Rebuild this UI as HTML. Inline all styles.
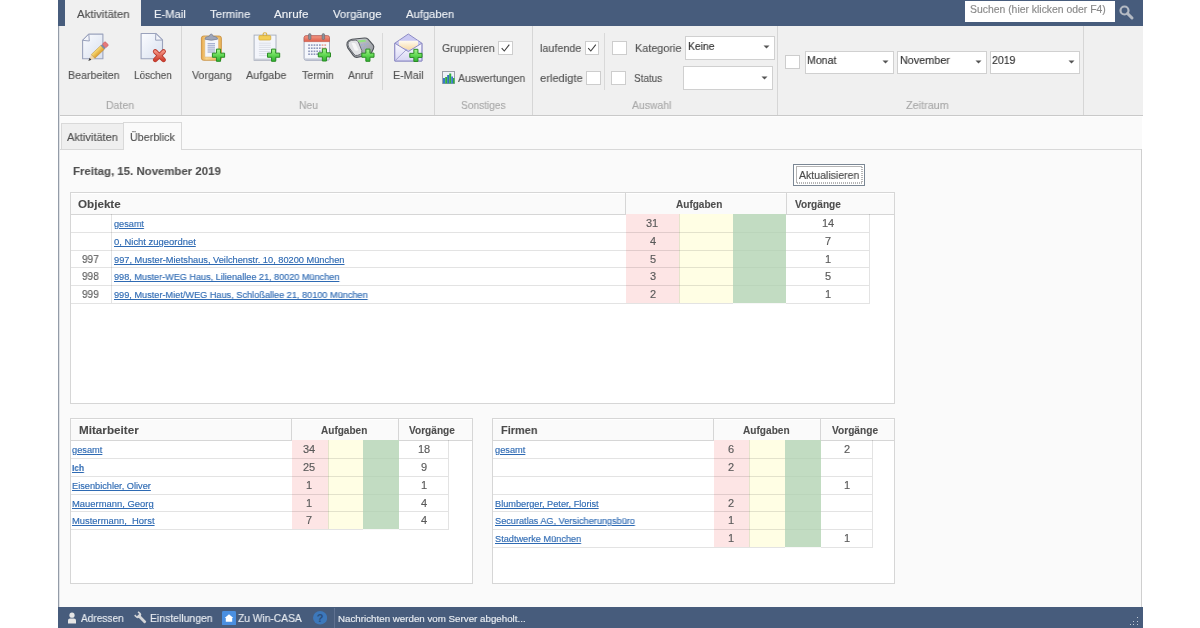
<!DOCTYPE html>
<html><head><meta charset="utf-8"><style>
html,body{margin:0;padding:0;}
body{width:1200px;height:628px;overflow:hidden;position:relative;background:#fff;font-family:"Liberation Sans", sans-serif;}
span{position:absolute;white-space:pre;will-change:transform;-webkit-text-stroke:0.15px currentColor;}
</style></head><body>
<div style="position:absolute;left:58px;top:0px;width:1085px;height:26px;background:#475c7c"></div>
<div style="position:absolute;left:65px;top:0px;width:76px;height:27px;background:#f0f0f0"></div>
<div style="position:absolute;left:58px;top:26px;width:1085px;height:89px;background:#f0f0f0"></div>
<div style="position:absolute;left:58px;top:115px;width:1085px;height:1px;background:#c9c9c9"></div>
<div style="position:absolute;left:58px;top:116px;width:1084px;height:491px;background:#fafafa"></div>
<div style="position:absolute;left:60px;top:116px;width:1082px;height:1px;background:#fdfdfd"></div>
<div style="position:absolute;left:58px;top:26px;width:1px;height:581px;background:#949ca8"></div>
<div style="position:absolute;left:59px;top:26px;width:1px;height:581px;background:#dfe2e6"></div>
<div style="position:absolute;left:181px;top:26px;width:1px;height:89px;background:#d6d6d6"></div>
<div style="position:absolute;left:434px;top:26px;width:1px;height:89px;background:#d6d6d6"></div>
<div style="position:absolute;left:532px;top:26px;width:1px;height:89px;background:#d6d6d6"></div>
<div style="position:absolute;left:777px;top:26px;width:1px;height:89px;background:#d6d6d6"></div>
<div style="position:absolute;left:1083px;top:26px;width:1px;height:89px;background:#d6d6d6"></div>
<div style="position:absolute;left:382px;top:33px;width:1px;height:57px;background:#d9d9d9"></div>
<div style="position:absolute;left:604px;top:33px;width:1px;height:57px;background:#d9d9d9"></div>
<div style="position:absolute;left:965px;top:1px;width:150px;height:21px;background:#ffffff"></div>
<svg style="position:absolute;left:1117px;top:3px" width="18" height="18" viewBox="0 0 18 18"><circle cx="7.5" cy="7.5" r="4" fill="none" stroke="#b4bac3" stroke-width="2.2"/><line x1="10.5" y1="10.5" x2="15" y2="15" stroke="#b4bac3" stroke-width="3" stroke-linecap="round"/></svg>
<div style="position:absolute;left:498px;top:41px;width:15px;height:14px;background:#fff;border:1px solid #cdcdcd;box-sizing:border-box"></div>
<svg style="position:absolute;left:498px;top:41px" width="15" height="14" viewBox="0 0 14 14"><path d="M3.2 7.2 L5.8 10 L10.8 3.6" fill="none" stroke="#404040" stroke-width="1.1"/></svg>
<div style="position:absolute;left:585px;top:41px;width:14px;height:14px;background:#fff;border:1px solid #cdcdcd;box-sizing:border-box"></div>
<svg style="position:absolute;left:585px;top:41px" width="14" height="14" viewBox="0 0 14 14"><path d="M3.2 7.2 L5.8 10 L10.8 3.6" fill="none" stroke="#404040" stroke-width="1.1"/></svg>
<div style="position:absolute;left:586px;top:71px;width:15px;height:14px;background:#fff;border:1px solid #cdcdcd;box-sizing:border-box"></div>
<div style="position:absolute;left:612px;top:41px;width:14.5px;height:14px;background:#fff;border:1px solid #cdcdcd;box-sizing:border-box"></div>
<div style="position:absolute;left:611.3px;top:71px;width:14.700000000000045px;height:14px;background:#fff;border:1px solid #cdcdcd;box-sizing:border-box"></div>
<div style="position:absolute;left:785px;top:55px;width:14.5px;height:14px;background:#fff;border:1px solid #cdcdcd;box-sizing:border-box"></div>
<div style="position:absolute;left:685px;top:36.3px;width:89.60000000000002px;height:23.300000000000004px;background:#fff;border:1px solid #d0d0d0;box-sizing:border-box"></div>
<svg style="position:absolute;left:762.6px;top:45.45px" width="7" height="4" viewBox="0 0 7 4"><path d="M0.5 0.5 L6.5 0.5 L3.5 3.5 Z" fill="#555"/></svg>
<div style="position:absolute;left:683px;top:66.4px;width:89.60000000000002px;height:23.39999999999999px;background:#fff;border:1px solid #d0d0d0;box-sizing:border-box"></div>
<svg style="position:absolute;left:760.6px;top:75.6px" width="7" height="4" viewBox="0 0 7 4"><path d="M0.5 0.5 L6.5 0.5 L3.5 3.5 Z" fill="#555"/></svg>
<div style="position:absolute;left:804.5px;top:51px;width:89.0px;height:22.5px;background:#fff;border:1px solid #d0d0d0;box-sizing:border-box"></div>
<svg style="position:absolute;left:881.5px;top:59.75px" width="7" height="4" viewBox="0 0 7 4"><path d="M0.5 0.5 L6.5 0.5 L3.5 3.5 Z" fill="#555"/></svg>
<div style="position:absolute;left:897.3px;top:51px;width:89.30000000000007px;height:22.5px;background:#fff;border:1px solid #d0d0d0;box-sizing:border-box"></div>
<svg style="position:absolute;left:974.6px;top:59.75px" width="7" height="4" viewBox="0 0 7 4"><path d="M0.5 0.5 L6.5 0.5 L3.5 3.5 Z" fill="#555"/></svg>
<div style="position:absolute;left:990px;top:51px;width:89.70000000000005px;height:22.5px;background:#fff;border:1px solid #d0d0d0;box-sizing:border-box"></div>
<svg style="position:absolute;left:1067.7px;top:59.75px" width="7" height="4" viewBox="0 0 7 4"><path d="M0.5 0.5 L6.5 0.5 L3.5 3.5 Z" fill="#555"/></svg>
<div style="position:absolute;left:60.5px;top:123px;width:63.0px;height:27px;background:#efefef;border:1px solid #d9d9d9;border-bottom:none;box-sizing:border-box"></div>
<div style="position:absolute;left:123px;top:122px;width:59px;height:28px;background:#fafafa;border:1px solid #d9d9d9;border-bottom:none;box-sizing:border-box"></div>
<div style="position:absolute;left:59.5px;top:149px;width:122.5px;height:1px;background:#d8d8d8"></div>
<div style="position:absolute;left:123.5px;top:149px;width:57.5px;height:1px;background:#fafafa"></div>
<div style="position:absolute;left:182px;top:149px;width:960px;height:1px;background:#d8d8d8"></div>
<div style="position:absolute;left:1141px;top:149px;width:1px;height:458px;background:#cfcfcf"></div>
<div style="position:absolute;left:793px;top:164px;width:72px;height:22px;background:#fff;border:1px solid #7b8794;box-sizing:border-box"></div>
<svg style="position:absolute;left:796px;top:166px" width="67" height="18"><rect x="0.5" y="0.5" width="65.5" height="16.5" fill="none" stroke="#6a6a6a" stroke-width="1" stroke-dasharray="1 1"/></svg>
<div style="position:absolute;left:70px;top:192px;width:825px;height:212px;background:#fff;border:1px solid #d6d6d6;box-sizing:border-box"></div>
<div style="position:absolute;left:70px;top:192px;width:825px;height:23px;background:#fafafa;border:1px solid #d6d6d6;box-sizing:border-box"></div>
<div style="position:absolute;left:71px;top:193px;width:823px;height:1px;background:#ffffff"></div>
<div style="position:absolute;left:625px;top:192px;width:1px;height:23px;background:#d6d6d6"></div>
<div style="position:absolute;left:786px;top:192px;width:1px;height:23px;background:#d6d6d6"></div>
<div style="position:absolute;left:626px;top:214px;width:53px;height:89px;background:#fde5e5"></div>
<div style="position:absolute;left:679px;top:214px;width:54px;height:89px;background:#fffee4"></div>
<div style="position:absolute;left:733px;top:214px;width:53px;height:89px;background:#c2dcc2"></div>
<div style="position:absolute;left:71px;top:232px;width:662px;height:1px;background:rgba(0,0,0,0.11)"></div>
<div style="position:absolute;left:733px;top:232px;width:53px;height:1px;background:rgba(0,0,0,0.03)"></div>
<div style="position:absolute;left:786px;top:232px;width:83px;height:1px;background:rgba(0,0,0,0.11)"></div>
<div style="position:absolute;left:71px;top:250px;width:662px;height:1px;background:rgba(0,0,0,0.11)"></div>
<div style="position:absolute;left:733px;top:250px;width:53px;height:1px;background:rgba(0,0,0,0.03)"></div>
<div style="position:absolute;left:786px;top:250px;width:83px;height:1px;background:rgba(0,0,0,0.11)"></div>
<div style="position:absolute;left:71px;top:267px;width:662px;height:1px;background:rgba(0,0,0,0.11)"></div>
<div style="position:absolute;left:733px;top:267px;width:53px;height:1px;background:rgba(0,0,0,0.03)"></div>
<div style="position:absolute;left:786px;top:267px;width:83px;height:1px;background:rgba(0,0,0,0.11)"></div>
<div style="position:absolute;left:71px;top:285px;width:662px;height:1px;background:rgba(0,0,0,0.11)"></div>
<div style="position:absolute;left:733px;top:285px;width:53px;height:1px;background:rgba(0,0,0,0.03)"></div>
<div style="position:absolute;left:786px;top:285px;width:83px;height:1px;background:rgba(0,0,0,0.11)"></div>
<div style="position:absolute;left:71px;top:303px;width:662px;height:1px;background:rgba(0,0,0,0.11)"></div>
<div style="position:absolute;left:733px;top:303px;width:53px;height:1px;background:rgba(0,0,0,0.03)"></div>
<div style="position:absolute;left:786px;top:303px;width:83px;height:1px;background:rgba(0,0,0,0.11)"></div>
<div style="position:absolute;left:679px;top:214px;width:1px;height:89px;background:rgba(0,0,0,0.1)"></div>
<div style="position:absolute;left:869px;top:214px;width:1px;height:90px;background:rgba(0,0,0,0.11)"></div>
<div style="position:absolute;left:111px;top:214px;width:1px;height:89px;background:rgba(0,0,0,0.11)"></div>
<div style="position:absolute;left:70px;top:418px;width:403px;height:166px;background:#fff;border:1px solid #d6d6d6;box-sizing:border-box"></div>
<div style="position:absolute;left:70px;top:418px;width:403px;height:23px;background:#fafafa;border:1px solid #d6d6d6;box-sizing:border-box"></div>
<div style="position:absolute;left:71px;top:419px;width:401px;height:1px;background:#ffffff"></div>
<div style="position:absolute;left:291px;top:418px;width:1px;height:23px;background:#d6d6d6"></div>
<div style="position:absolute;left:398px;top:418px;width:1px;height:23px;background:#d6d6d6"></div>
<div style="position:absolute;left:292px;top:440px;width:36px;height:89px;background:#fde5e5"></div>
<div style="position:absolute;left:328px;top:440px;width:35px;height:89px;background:#fffee4"></div>
<div style="position:absolute;left:363px;top:440px;width:36px;height:89px;background:#c2dcc2"></div>
<div style="position:absolute;left:71px;top:458px;width:292px;height:1px;background:rgba(0,0,0,0.11)"></div>
<div style="position:absolute;left:363px;top:458px;width:36px;height:1px;background:rgba(0,0,0,0.03)"></div>
<div style="position:absolute;left:399px;top:458px;width:49px;height:1px;background:rgba(0,0,0,0.11)"></div>
<div style="position:absolute;left:71px;top:476px;width:292px;height:1px;background:rgba(0,0,0,0.11)"></div>
<div style="position:absolute;left:363px;top:476px;width:36px;height:1px;background:rgba(0,0,0,0.03)"></div>
<div style="position:absolute;left:399px;top:476px;width:49px;height:1px;background:rgba(0,0,0,0.11)"></div>
<div style="position:absolute;left:71px;top:494px;width:292px;height:1px;background:rgba(0,0,0,0.11)"></div>
<div style="position:absolute;left:363px;top:494px;width:36px;height:1px;background:rgba(0,0,0,0.03)"></div>
<div style="position:absolute;left:399px;top:494px;width:49px;height:1px;background:rgba(0,0,0,0.11)"></div>
<div style="position:absolute;left:71px;top:511px;width:292px;height:1px;background:rgba(0,0,0,0.11)"></div>
<div style="position:absolute;left:363px;top:511px;width:36px;height:1px;background:rgba(0,0,0,0.03)"></div>
<div style="position:absolute;left:399px;top:511px;width:49px;height:1px;background:rgba(0,0,0,0.11)"></div>
<div style="position:absolute;left:71px;top:529px;width:292px;height:1px;background:rgba(0,0,0,0.11)"></div>
<div style="position:absolute;left:363px;top:529px;width:36px;height:1px;background:rgba(0,0,0,0.03)"></div>
<div style="position:absolute;left:399px;top:529px;width:49px;height:1px;background:rgba(0,0,0,0.11)"></div>
<div style="position:absolute;left:328px;top:440px;width:1px;height:89px;background:rgba(0,0,0,0.1)"></div>
<div style="position:absolute;left:448px;top:440px;width:1px;height:90px;background:rgba(0,0,0,0.11)"></div>
<div style="position:absolute;left:492px;top:418px;width:403px;height:166px;background:#fff;border:1px solid #d6d6d6;box-sizing:border-box"></div>
<div style="position:absolute;left:492px;top:418px;width:403px;height:23px;background:#fafafa;border:1px solid #d6d6d6;box-sizing:border-box"></div>
<div style="position:absolute;left:493px;top:419px;width:401px;height:1px;background:#ffffff"></div>
<div style="position:absolute;left:713px;top:418px;width:1px;height:23px;background:#d6d6d6"></div>
<div style="position:absolute;left:820px;top:418px;width:1px;height:23px;background:#d6d6d6"></div>
<div style="position:absolute;left:714px;top:440px;width:35px;height:107px;background:#fde5e5"></div>
<div style="position:absolute;left:749px;top:440px;width:36px;height:107px;background:#fffee4"></div>
<div style="position:absolute;left:785px;top:440px;width:36px;height:107px;background:#c2dcc2"></div>
<div style="position:absolute;left:493px;top:458px;width:292px;height:1px;background:rgba(0,0,0,0.11)"></div>
<div style="position:absolute;left:785px;top:458px;width:36px;height:1px;background:rgba(0,0,0,0.03)"></div>
<div style="position:absolute;left:821px;top:458px;width:51px;height:1px;background:rgba(0,0,0,0.11)"></div>
<div style="position:absolute;left:493px;top:476px;width:292px;height:1px;background:rgba(0,0,0,0.11)"></div>
<div style="position:absolute;left:785px;top:476px;width:36px;height:1px;background:rgba(0,0,0,0.03)"></div>
<div style="position:absolute;left:821px;top:476px;width:51px;height:1px;background:rgba(0,0,0,0.11)"></div>
<div style="position:absolute;left:493px;top:494px;width:292px;height:1px;background:rgba(0,0,0,0.11)"></div>
<div style="position:absolute;left:785px;top:494px;width:36px;height:1px;background:rgba(0,0,0,0.03)"></div>
<div style="position:absolute;left:821px;top:494px;width:51px;height:1px;background:rgba(0,0,0,0.11)"></div>
<div style="position:absolute;left:493px;top:511px;width:292px;height:1px;background:rgba(0,0,0,0.11)"></div>
<div style="position:absolute;left:785px;top:511px;width:36px;height:1px;background:rgba(0,0,0,0.03)"></div>
<div style="position:absolute;left:821px;top:511px;width:51px;height:1px;background:rgba(0,0,0,0.11)"></div>
<div style="position:absolute;left:493px;top:529px;width:292px;height:1px;background:rgba(0,0,0,0.11)"></div>
<div style="position:absolute;left:785px;top:529px;width:36px;height:1px;background:rgba(0,0,0,0.03)"></div>
<div style="position:absolute;left:821px;top:529px;width:51px;height:1px;background:rgba(0,0,0,0.11)"></div>
<div style="position:absolute;left:493px;top:547px;width:292px;height:1px;background:rgba(0,0,0,0.11)"></div>
<div style="position:absolute;left:785px;top:547px;width:36px;height:1px;background:rgba(0,0,0,0.03)"></div>
<div style="position:absolute;left:821px;top:547px;width:51px;height:1px;background:rgba(0,0,0,0.11)"></div>
<div style="position:absolute;left:749px;top:440px;width:1px;height:107px;background:rgba(0,0,0,0.1)"></div>
<div style="position:absolute;left:872px;top:440px;width:1px;height:108px;background:rgba(0,0,0,0.11)"></div>
<div style="position:absolute;left:58px;top:607px;width:1085px;height:21px;background:#475c7c"></div>
<div style="position:absolute;left:334.2px;top:608px;width:1.0px;height:20px;background:#5f7190"></div>
<svg style="position:absolute;left:67px;top:612px" width="10" height="12" viewBox="0 0 10 12"><circle cx="5" cy="3.2" r="2.6" fill="#e6e6e6"/><path d="M1 11.5 L1 8.2 Q1 6.6 3 6.4 L7 6.4 Q9 6.6 9 8.2 L9 11.5 Z" fill="#e6e6e6"/></svg><svg style="position:absolute;left:133.5px;top:611px" width="14" height="14" viewBox="0 0 14 14"><g transform="rotate(-45 7 7)"><rect x="5.6" y="3.5" width="2.8" height="10" rx="1" fill="#d4d6d9"/><path d="M3.8 0.5 L3.8 3.2 Q3.8 5.6 7 5.6 Q10.2 5.6 10.2 3.2 L10.2 0.5 L8.6 0.5 L8.6 2.8 L5.4 2.8 L5.4 0.5 Z" fill="#d4d6d9"/></g></svg><svg style="position:absolute;left:221.8px;top:610.7px" width="14" height="14.6" viewBox="0 0 14 14.6"><rect x="0" y="0" width="14" height="14.6" rx="1.5" fill="#4a8fe0"/><path d="M7 3.2 L11.3 7 L10.2 7 L10.2 10.8 L3.8 10.8 L3.8 7 L2.7 7 Z" fill="#ffffff"/></svg><svg style="position:absolute;left:312.9px;top:611.2px" width="14.2" height="13.6" viewBox="0 0 14.2 13.6"><ellipse cx="7.1" cy="6.8" rx="7.1" ry="6.8" fill="#3d78bb"/><text x="7.1" y="10.8" font-family="Liberation Sans" font-size="11" font-weight="bold" fill="#2a4f7e" text-anchor="middle">?</text></svg><div style="position:absolute;left:1136.5px;top:617px;width:1.2px;height:1.2px;background:#c3cbd6"></div><div style="position:absolute;left:1133px;top:620.5px;width:1.2px;height:1.2px;background:#c3cbd6"></div><div style="position:absolute;left:1136.5px;top:620.5px;width:1.2px;height:1.2px;background:#c3cbd6"></div><div style="position:absolute;left:1129.5px;top:624px;width:1.2px;height:1.2px;background:#c3cbd6"></div><div style="position:absolute;left:1133px;top:624px;width:1.2px;height:1.2px;background:#c3cbd6"></div><div style="position:absolute;left:1136.5px;top:624px;width:1.2px;height:1.2px;background:#c3cbd6"></div><svg style="position:absolute;left:442px;top:71px" width="13" height="13" viewBox="0 0 13 13">
<rect x="0.5" y="0.5" width="12" height="12" fill="#eef2f8" stroke="#9aa0a8" stroke-width="1"/>
<rect x="1" y="7" width="2.2" height="5.5" fill="#3a78c8"/><rect x="3.2" y="6" width="2" height="6.5" fill="#2fae3c"/>
<rect x="5.2" y="4" width="2" height="8.5" fill="#2f70b8"/><rect x="7.2" y="2.5" width="2" height="10" fill="#2fae3c"/>
<rect x="9.2" y="5.5" width="1.8" height="7" fill="#3a78c8"/><rect x="11" y="7" width="1.5" height="5.5" fill="#2fae3c"/>
</svg><svg style="position:absolute;left:78px;top:30px" width="34" height="34" viewBox="0 0 34 34"><defs><linearGradient id="docg" x1="0" y1="0" x2="1" y2="1"><stop offset="0" stop-color="#fbfcff"/><stop offset="1" stop-color="#d8e0ef"/></linearGradient><linearGradient id="pencg" x1="0" y1="0" x2="0" y2="1"><stop offset="0" stop-color="#f9df7a"/><stop offset="1" stop-color="#dc9e2c"/></linearGradient><linearGradient id="xg" x1="0" y1="0" x2="0" y2="1"><stop offset="0" stop-color="#f49080"/><stop offset="1" stop-color="#cf4233"/></linearGradient></defs>
<path d="M10.8 4.1 H24.9 V28.7 H4.6 V10.3 Z" fill="url(#docg)" stroke="#9aa2bc" stroke-width="1.1" stroke-linejoin="round"/>
<path d="M10.8 4.1 L11.3 11 L4.6 10.3 Z" fill="#f2f4fa" stroke="#9aa2bc" stroke-width="1" stroke-linejoin="round"/>
<g transform="translate(10.3 30.9) rotate(-43.4)">
<path d="M0 0 L3.2 -1.3 L3.2 1.3 Z" fill="#3c3c3c"/>
<path d="M3.2 -1.3 L6.6 -2.6 L6.6 2.6 L3.2 1.3 Z" fill="#f0d6a8"/>
<rect x="6.6" y="-2.6" width="13" height="5.2" fill="url(#pencg)" stroke="#b78836" stroke-width="0.5"/>
<rect x="19.6" y="-2.6" width="2" height="5.2" fill="#7d8aa6"/>
<rect x="21.6" y="-2.6" width="4" height="5.2" rx="1.2" fill="#e6797a" stroke="#c25656" stroke-width="0.5"/>
</g></svg><svg style="position:absolute;left:136px;top:30px" width="34" height="34" viewBox="0 0 34 34">
<path d="M5.1 3.5 H19.8 L26.5 10 V28.7 H5.1 Z" fill="url(#docg)" stroke="#9aa2bc" stroke-width="1.1" stroke-linejoin="round"/>
<path d="M19.8 3.5 L19.6 10.2 L26.5 10 Z" fill="#f2f4fa" stroke="#9aa2bc" stroke-width="1" stroke-linejoin="round"/>
<path d="M19.2 21.5 L27.6 29.9 M27.6 21.5 L19.2 29.9" stroke="#b8392c" stroke-width="4.6" stroke-linecap="round"/>
<path d="M19.2 21.5 L27.6 29.9 M27.6 21.5 L19.2 29.9" stroke="url(#xg)" stroke-width="3.0" stroke-linecap="round"/>
</svg><svg style="position:absolute;left:196px;top:30px" width="34" height="34" viewBox="0 0 34 34">
<defs><linearGradient id="cbg" x1="0" y1="0" x2="1" y2="0"><stop offset="0" stop-color="#e7a84a"/><stop offset="0.25" stop-color="#f8d690"/><stop offset="1" stop-color="#eab45a"/></linearGradient></defs>
<rect x="5.4" y="6" width="20" height="24.3" rx="2.2" fill="url(#cbg)" stroke="#c58a38" stroke-width="0.8"/>
<rect x="8.9" y="8.2" width="13.6" height="18.8" fill="#f4f6fb" stroke="#d6b070" stroke-width="0.5"/>
<path d="M9 9.2 Q9 6.8 11.5 6.6 L13.2 6.3 Q14 4 15.2 4 Q16.4 4 17.2 6.3 L19 6.6 Q21.6 6.8 21.6 9.2 Q15.3 11.2 9 9.2 Z" fill="#9ea6ba" stroke="#767e94" stroke-width="0.7"/>
<g fill="#a7b2d2"><rect x="11.6" y="13" width="7.4" height="1.3"/><rect x="11.6" y="15.1" width="7.4" height="1.3"/><rect x="11.6" y="17.2" width="7.4" height="1.3"/><rect x="11.6" y="19.3" width="7.4" height="1.3"/><rect x="11.6" y="21.4" width="7.4" height="1.3"/></g>
<defs><linearGradient id="pgv" x1="0" y1="0" x2="0" y2="1"><stop offset="0" stop-color="#a6f58e"/><stop offset="0.5" stop-color="#62d853"/><stop offset="1" stop-color="#2fb232"/></linearGradient></defs><path d="M20.45 19.1 H24.55 V23.15 H28.6 V27.25 H24.55 V31.299999999999997 H20.45 V27.25 H16.4 V23.15 H20.45 Z" fill="url(#pgv)" stroke="#2b8c24" stroke-width="1" stroke-linejoin="round"/></svg><svg style="position:absolute;left:250px;top:30px" width="34" height="34" viewBox="0 0 34 34">
<rect x="4.1" y="5.1" width="21.9" height="25.2" fill="#f3f5fb" stroke="#a5acbb" stroke-width="0.9"/>
<rect x="4.6" y="28.6" width="21" height="1.5" fill="#c9cdd6"/>
<circle cx="14.9" cy="4.6" r="1.9" fill="none" stroke="#d9ae3e" stroke-width="1.1"/>
<rect x="8.9" y="5.6" width="11.9" height="4.5" rx="1" fill="#f3cd55" stroke="#c99e2c" stroke-width="0.6"/>
<g fill="#d9dce4"><rect x="8.9" y="12.7" width="11.9" height="0.9"/><rect x="8.9" y="14.8" width="11.9" height="0.9"/><rect x="8.9" y="16.9" width="11.9" height="0.9"/><rect x="8.9" y="19" width="11.9" height="0.9"/><rect x="8.9" y="21.1" width="11.9" height="0.9"/><rect x="8.9" y="23.2" width="11.9" height="0.9"/><rect x="8.9" y="25.2" width="11.9" height="0.9"/></g>
<defs><linearGradient id="pga" x1="0" y1="0" x2="0" y2="1"><stop offset="0" stop-color="#a6f58e"/><stop offset="0.5" stop-color="#62d853"/><stop offset="1" stop-color="#2fb232"/></linearGradient></defs><path d="M21.55 19.1 H25.650000000000002 V23.15 H29.700000000000003 V27.25 H25.650000000000002 V31.299999999999997 H21.55 V27.25 H17.5 V23.15 H21.55 Z" fill="url(#pga)" stroke="#2b8c24" stroke-width="1" stroke-linejoin="round"/></svg><svg style="position:absolute;left:300px;top:30px" width="34" height="34" viewBox="0 0 34 34">
<defs><linearGradient id="calr" x1="0" y1="0" x2="0" y2="1"><stop offset="0" stop-color="#f59a86"/><stop offset="1" stop-color="#dc5d4a"/></linearGradient></defs>
<rect x="4.1" y="5.7" width="25.4" height="24.6" rx="2" fill="#f5f7fc" stroke="#9ba3b8" stroke-width="0.9"/>
<rect x="4.6" y="28.4" width="24.4" height="1.6" fill="#c3c8d6"/>
<path d="M4.1 7.7 Q4.1 5.7 6.1 5.7 H27.5 Q29.5 5.7 29.5 7.7 V11.6 H4.1 Z" fill="url(#calr)" stroke="#c65443" stroke-width="0.7"/>
<rect x="8.5" y="3.6" width="2.5" height="6" rx="1.2" fill="#8c9099" stroke="#5f636b" stroke-width="0.5"/>
<rect x="22.1" y="3.6" width="2.5" height="6" rx="1.2" fill="#8c9099" stroke="#5f636b" stroke-width="0.5"/>
<rect x="8.2" y="14.3" width="1.7" height="1.6" fill="#8f98bb"/><rect x="10.9" y="14.3" width="1.7" height="1.6" fill="#8f98bb"/><rect x="13.6" y="14.3" width="1.7" height="1.6" fill="#8f98bb"/><rect x="16.3" y="14.3" width="1.7" height="1.6" fill="#8f98bb"/><rect x="19.0" y="14.3" width="1.7" height="1.6" fill="#8f98bb"/><rect x="21.7" y="14.3" width="1.7" height="1.6" fill="#e49c92"/><rect x="24.4" y="14.3" width="1.7" height="1.6" fill="#e49c92"/><rect x="8.2" y="17.4" width="1.7" height="1.6" fill="#8f98bb"/><rect x="10.9" y="17.4" width="1.7" height="1.6" fill="#8f98bb"/><rect x="13.6" y="17.4" width="1.7" height="1.6" fill="#8f98bb"/><rect x="16.3" y="17.4" width="1.7" height="1.6" fill="#8f98bb"/><rect x="19.0" y="17.4" width="1.7" height="1.6" fill="#8f98bb"/><rect x="21.7" y="17.4" width="1.7" height="1.6" fill="#e49c92"/><rect x="24.4" y="17.4" width="1.7" height="1.6" fill="#e49c92"/><rect x="8.2" y="20.5" width="1.7" height="1.6" fill="#8f98bb"/><rect x="10.9" y="20.5" width="1.7" height="1.6" fill="#8f98bb"/><rect x="13.6" y="20.5" width="1.7" height="1.6" fill="#8f98bb"/><rect x="16.3" y="20.5" width="1.7" height="1.6" fill="#8f98bb"/><rect x="19.0" y="20.5" width="1.7" height="1.6" fill="#8f98bb"/><rect x="21.7" y="20.5" width="1.7" height="1.6" fill="#8f98bb"/><rect x="24.4" y="20.5" width="1.7" height="1.6" fill="#8f98bb"/><rect x="8.2" y="23.4" width="1.7" height="1.6" fill="#8f98bb"/><rect x="10.9" y="23.4" width="1.7" height="1.6" fill="#8f98bb"/><rect x="13.6" y="23.4" width="1.7" height="1.6" fill="#8f98bb"/><rect x="16.3" y="23.4" width="1.7" height="1.6" fill="#8f98bb"/><rect x="19.0" y="23.4" width="1.7" height="1.6" fill="#8f98bb"/><rect x="21.7" y="23.4" width="1.7" height="1.6" fill="#8f98bb"/><rect x="24.4" y="23.4" width="1.7" height="1.6" fill="#8f98bb"/><defs><linearGradient id="pgt" x1="0" y1="0" x2="0" y2="1"><stop offset="0" stop-color="#a6f58e"/><stop offset="0.5" stop-color="#62d853"/><stop offset="1" stop-color="#2fb232"/></linearGradient></defs><path d="M22.349999999999998 18.799999999999997 H26.45 V22.849999999999998 H30.5 V26.95 H26.45 V31.0 H22.349999999999998 V26.95 H18.299999999999997 V22.849999999999998 H22.349999999999998 Z" fill="url(#pgt)" stroke="#2b8c24" stroke-width="1" stroke-linejoin="round"/></svg><svg style="position:absolute;left:343px;top:30px" width="34" height="34" viewBox="0 0 34 34">
<defs><linearGradient id="phb" x1="0" y1="0" x2="1" y2="1"><stop offset="0" stop-color="#d4d6da"/><stop offset="1" stop-color="#8e9298"/></linearGradient></defs>
<path d="M4.2 12.6 Q5.5 9.8 9 9.3 L21.5 8 Q23.6 7.8 25 9.2 L30.2 15.2 Q31.4 16.8 30.4 18.8 L28.6 22.6 Q27.6 24.6 25.3 25.1 L14.8 27.3 Q12 27.8 10.4 25.6 L4.6 17.6 Q3.4 15.2 4.2 12.6 Z" fill="url(#phb)" stroke="#4e5258" stroke-width="1.1"/>
<path d="M5.3 12.6 Q6.2 10.6 8.6 10.4 L12.2 10.1 Q14.4 10 15.4 12 L18.8 20.5 Q19.5 23.2 17.2 24.4 L14.6 25.4 Q12.3 26.1 10.9 24.2 L5.6 17 Q4.6 14.8 5.3 12.6 Z" fill="#e1e2e5" stroke="#5c6066" stroke-width="0.9"/>
<path d="M8.5 13 Q10.5 12.2 12.5 13.5 L15.5 20 Q13.5 21.5 11.5 20 Z" fill="#f6f6f7"/>
<path d="M14.6 10.6 L21.8 9.8 L23.4 11.6 L16.2 12.6 Z" fill="#90e080"/>
<g fill="#a3acd0"><circle cx="18.5" cy="15" r="1"/><circle cx="21.5" cy="14.5" r="1"/><circle cx="24.5" cy="14" r="1"/><circle cx="19.6" cy="18" r="1"/><circle cx="22.6" cy="17.5" r="1"/></g>
<defs><linearGradient id="pgp" x1="0" y1="0" x2="0" y2="1"><stop offset="0" stop-color="#a6f58e"/><stop offset="0.5" stop-color="#62d853"/><stop offset="1" stop-color="#2fb232"/></linearGradient></defs><path d="M22.849999999999998 19.1 H26.95 V23.15 H31.0 V27.25 H26.95 V31.299999999999997 H22.849999999999998 V27.25 H18.799999999999997 V23.15 H22.849999999999998 Z" fill="url(#pgp)" stroke="#2b8c24" stroke-width="1" stroke-linejoin="round"/></svg><svg style="position:absolute;left:391px;top:30px" width="34" height="34" viewBox="0 0 34 34">
<defs><linearGradient id="envf" x1="0" y1="0" x2="0" y2="1"><stop offset="0" stop-color="#fbfbff"/><stop offset="1" stop-color="#d8d6f4"/></linearGradient><linearGradient id="envl" x1="0" y1="0" x2="0" y2="1"><stop offset="0" stop-color="#fffaf0"/><stop offset="1" stop-color="#f8dca8"/></linearGradient></defs>
<path d="M3.8 13.2 L17.3 4 L30.9 13.2 V31 H3.8 Z" fill="#c9c8f2" stroke="#8d8bc4" stroke-width="1" stroke-linejoin="round"/>
<path d="M7.9 10.8 H27 V18.5 Q24 17 21 18.8 Q18 20.5 15 18.8 Q11 16.8 7.9 18.5 Z" fill="url(#envl)"/>
<path d="M3.8 13.2 L17.3 21.5 L30.9 13.2 V31 H3.8 Z" fill="url(#envf)" stroke="#8d8bc4" stroke-width="1" stroke-linejoin="round"/>
<path d="M4.3 30.5 L15.5 19.5" stroke="#9a98cc" stroke-width="0.9"/>
<defs><linearGradient id="pge" x1="0" y1="0" x2="0" y2="1"><stop offset="0" stop-color="#a6f58e"/><stop offset="0.5" stop-color="#62d853"/><stop offset="1" stop-color="#2fb232"/></linearGradient></defs><path d="M22.849999999999998 19.299999999999997 H26.95 V23.349999999999998 H31.0 V27.45 H26.95 V31.5 H22.849999999999998 V27.45 H18.799999999999997 V23.349999999999998 H22.849999999999998 Z" fill="url(#pge)" stroke="#2b8c24" stroke-width="1" stroke-linejoin="round"/></svg>
<span style="left:76.75px;top:8.18px;font-size:11.6px;line-height:11.6px;font-weight:normal;color:#505050;transform:scaleX(0.9852);transform-origin:0 0;">Aktivitäten</span>
<span style="left:153.75px;top:8.18px;font-size:11.6px;line-height:11.6px;font-weight:normal;color:#eef1f5;transform:scaleX(0.9682);transform-origin:0 0;">E-Mail</span>
<span style="left:210.00px;top:8.18px;font-size:11.6px;line-height:11.6px;font-weight:normal;color:#eef1f5;transform:scaleX(0.9807);transform-origin:0 0;">Termine</span>
<span style="left:274.00px;top:8.18px;font-size:11.6px;line-height:11.6px;font-weight:normal;color:#eef1f5;transform:scaleX(1.0086);transform-origin:0 0;">Anrufe</span>
<span style="left:333.00px;top:8.18px;font-size:11.6px;line-height:11.6px;font-weight:normal;color:#eef1f5;transform:scaleX(0.9757);transform-origin:0 0;">Vorgänge</span>
<span style="left:405.50px;top:8.18px;font-size:11.6px;line-height:11.6px;font-weight:normal;color:#eef1f5;transform:scaleX(0.9696);transform-origin:0 0;">Aufgaben</span>
<span style="left:969.60px;top:5.17px;font-size:10.2px;line-height:10.2px;font-weight:normal;color:#8a8a8a;transform:scaleX(1.0206);transform-origin:0 0;">Suchen (hier klicken oder F4)</span>
<span style="left:68.25px;top:69.18px;font-size:11.6px;line-height:11.6px;font-weight:normal;color:#555555;transform:scaleX(0.9168);transform-origin:0 0;">Bearbeiten</span>
<span style="left:134.00px;top:69.18px;font-size:11.6px;line-height:11.6px;font-weight:normal;color:#555555;transform:scaleX(0.8597);transform-origin:0 0;">Löschen</span>
<span style="left:191.70px;top:69.18px;font-size:11.6px;line-height:11.6px;font-weight:normal;color:#555555;transform:scaleX(0.9194);transform-origin:0 0;">Vorgang</span>
<span style="left:246.00px;top:69.18px;font-size:11.6px;line-height:11.6px;font-weight:normal;color:#555555;transform:scaleX(0.9358);transform-origin:0 0;">Aufgabe</span>
<span style="left:301.50px;top:69.18px;font-size:11.6px;line-height:11.6px;font-weight:normal;color:#555555;transform:scaleX(0.9173);transform-origin:0 0;">Termin</span>
<span style="left:347.70px;top:69.18px;font-size:11.6px;line-height:11.6px;font-weight:normal;color:#555555;transform:scaleX(0.8986);transform-origin:0 0;">Anruf</span>
<span style="left:393.00px;top:69.18px;font-size:11.6px;line-height:11.6px;font-weight:normal;color:#555555;transform:scaleX(0.9295);transform-origin:0 0;">E-Mail</span>
<span style="left:105.60px;top:100.12px;font-size:11.2px;line-height:11.2px;font-weight:normal;color:#a9a9a9;transform:scaleX(0.9382);transform-origin:0 0;">Daten</span>
<span style="left:298.60px;top:100.12px;font-size:11.2px;line-height:11.2px;font-weight:normal;color:#a9a9a9;transform:scaleX(0.9261);transform-origin:0 0;">Neu</span>
<span style="left:460.60px;top:100.12px;font-size:11.2px;line-height:11.2px;font-weight:normal;color:#a9a9a9;transform:scaleX(0.9084);transform-origin:0 0;">Sonstiges</span>
<span style="left:632.40px;top:100.12px;font-size:11.2px;line-height:11.2px;font-weight:normal;color:#a9a9a9;transform:scaleX(0.9330);transform-origin:0 0;">Auswahl</span>
<span style="left:905.70px;top:100.12px;font-size:11.2px;line-height:11.2px;font-weight:normal;color:#a9a9a9;transform:scaleX(0.9699);transform-origin:0 0;">Zeitraum</span>
<span style="left:441.70px;top:42.18px;font-size:11.6px;line-height:11.6px;font-weight:normal;color:#555555;transform:scaleX(0.9087);transform-origin:0 0;">Gruppieren</span>
<span style="left:458.00px;top:71.98px;font-size:11.6px;line-height:11.6px;font-weight:normal;color:#555555;transform:scaleX(0.9067);transform-origin:0 0;">Auswertungen</span>
<span style="left:539.50px;top:42.18px;font-size:11.6px;line-height:11.6px;font-weight:normal;color:#555555;transform:scaleX(0.9288);transform-origin:0 0;">laufende</span>
<span style="left:539.50px;top:71.98px;font-size:11.6px;line-height:11.6px;font-weight:normal;color:#555555;transform:scaleX(0.9608);transform-origin:0 0;">erledigte</span>
<span style="left:635.00px;top:42.18px;font-size:11.6px;line-height:11.6px;font-weight:normal;color:#555555;transform:scaleX(0.9353);transform-origin:0 0;">Kategorie</span>
<span style="left:633.60px;top:72.38px;font-size:11.6px;line-height:11.6px;font-weight:normal;color:#555555;transform:scaleX(0.8588);transform-origin:0 0;">Status</span>
<span style="left:687.60px;top:40.48px;font-size:11.6px;line-height:11.6px;font-weight:normal;color:#333;transform:scaleX(0.8903);transform-origin:0 0;">Keine</span>
<span style="left:807.30px;top:54.38px;font-size:11.6px;line-height:11.6px;font-weight:normal;color:#333;transform:scaleX(0.9151);transform-origin:0 0;">Monat</span>
<span style="left:899.80px;top:54.38px;font-size:11.6px;line-height:11.6px;font-weight:normal;color:#333;transform:scaleX(0.9325);transform-origin:0 0;">November</span>
<span style="left:992.30px;top:54.38px;font-size:11.6px;line-height:11.6px;font-weight:normal;color:#333;transform:scaleX(0.9075);transform-origin:0 0;">2019</span>
<span style="left:66.70px;top:130.98px;font-size:11.6px;line-height:11.6px;font-weight:normal;color:#505050;transform:scaleX(0.9522);transform-origin:0 0;">Aktivitäten</span>
<span style="left:129.70px;top:130.98px;font-size:11.6px;line-height:11.6px;font-weight:normal;color:#505050;transform:scaleX(0.9273);transform-origin:0 0;">Überblick</span>
<span style="left:72.50px;top:165.18px;font-size:11.6px;line-height:11.6px;font-weight:bold;color:#505050;transform:scaleX(0.9841);transform-origin:0 0;-webkit-text-stroke:0.1px currentColor;">Freitag, 15. November 2019</span>
<span style="left:798.50px;top:169.63px;font-size:10.6px;line-height:10.6px;font-weight:normal;color:#4a4a4a;transform:scaleX(0.9941);transform-origin:0 0;">Aktualisieren</span>
<span style="left:113.80px;top:219.71px;font-size:9.2px;line-height:9.2px;font-weight:normal;color:#2e6ab3;transform:scaleX(0.9942);transform-origin:0 0;text-decoration:underline;text-decoration-thickness:0.8px;text-underline-offset:1px;">gesamt</span>
<span style="left:646.44px;top:218.49px;font-size:11px;line-height:11px;font-weight:normal;color:#5a5a5a;">31</span>
<span style="left:822.04px;top:218.49px;font-size:11px;line-height:11px;font-weight:normal;color:#5a5a5a;">14</span>
<span style="left:113.80px;top:237.71px;font-size:9.2px;line-height:9.2px;font-weight:normal;color:#2e6ab3;transform:scaleX(1.0260);transform-origin:0 0;text-decoration:underline;text-decoration-thickness:0.8px;text-underline-offset:1px;">0, Nicht zugeordnet</span>
<span style="left:649.50px;top:236.49px;font-size:11px;line-height:11px;font-weight:normal;color:#5a5a5a;">4</span>
<span style="left:825.10px;top:236.49px;font-size:11px;line-height:11px;font-weight:normal;color:#5a5a5a;">7</span>
<span style="left:113.80px;top:255.71px;font-size:9.2px;line-height:9.2px;font-weight:normal;color:#2e6ab3;transform:scaleX(1.0052);transform-origin:0 0;text-decoration:underline;text-decoration-thickness:0.8px;text-underline-offset:1px;">997, Muster-Mietshaus, Veilchenstr. 10, 80200 München</span>
<span style="left:82.30px;top:254.29px;font-size:11px;line-height:11px;font-weight:normal;color:#5a5a5a;transform:scaleX(0.9158);transform-origin:0 0;">997</span>
<span style="left:649.50px;top:254.49px;font-size:11px;line-height:11px;font-weight:normal;color:#5a5a5a;">5</span>
<span style="left:825.10px;top:254.49px;font-size:11px;line-height:11px;font-weight:normal;color:#5a5a5a;">1</span>
<span style="left:113.80px;top:272.71px;font-size:9.2px;line-height:9.2px;font-weight:normal;color:#2e6ab3;transform:scaleX(0.9919);transform-origin:0 0;text-decoration:underline;text-decoration-thickness:0.8px;text-underline-offset:1px;">998, Muster-WEG Haus, Lilienallee 21, 80020 München</span>
<span style="left:82.30px;top:271.29px;font-size:11px;line-height:11px;font-weight:normal;color:#5a5a5a;transform:scaleX(0.9158);transform-origin:0 0;">998</span>
<span style="left:649.50px;top:271.49px;font-size:11px;line-height:11px;font-weight:normal;color:#5a5a5a;">3</span>
<span style="left:825.10px;top:271.49px;font-size:11px;line-height:11px;font-weight:normal;color:#5a5a5a;">5</span>
<span style="left:113.80px;top:290.71px;font-size:9.2px;line-height:9.2px;font-weight:normal;color:#2e6ab3;transform:scaleX(0.9976);transform-origin:0 0;text-decoration:underline;text-decoration-thickness:0.8px;text-underline-offset:1px;">999, Muster-Miet/WEG Haus, Schloßallee 21, 80100 München</span>
<span style="left:82.30px;top:289.29px;font-size:11px;line-height:11px;font-weight:normal;color:#5a5a5a;transform:scaleX(0.9158);transform-origin:0 0;">999</span>
<span style="left:649.50px;top:289.49px;font-size:11px;line-height:11px;font-weight:normal;color:#5a5a5a;">2</span>
<span style="left:825.10px;top:289.49px;font-size:11px;line-height:11px;font-weight:normal;color:#5a5a5a;">1</span>
<span style="left:78.40px;top:198.69px;font-size:11px;line-height:11px;font-weight:bold;color:#4a4a4a;transform:scaleX(1.0589);transform-origin:0 0;-webkit-text-stroke:0.1px currentColor;">Objekte</span>
<span style="left:676.10px;top:199.84px;font-size:10px;line-height:10px;font-weight:bold;color:#4e4e4e;transform:scaleX(1.0043);transform-origin:0 0;-webkit-text-stroke:0.1px currentColor;">Aufgaben</span>
<span style="left:794.80px;top:199.84px;font-size:10px;line-height:10px;font-weight:bold;color:#4e4e4e;transform:scaleX(1.0106);transform-origin:0 0;-webkit-text-stroke:0.1px currentColor;">Vorgänge</span>
<span style="left:72.30px;top:445.71px;font-size:9.2px;line-height:9.2px;font-weight:normal;color:#2e6ab3;transform:scaleX(1.0073);transform-origin:0 0;text-decoration:underline;text-decoration-thickness:0.8px;text-underline-offset:1px;">gesamt</span>
<span style="left:303.04px;top:444.49px;font-size:11px;line-height:11px;font-weight:normal;color:#5a5a5a;">34</span>
<span style="left:417.59px;top:444.49px;font-size:11px;line-height:11px;font-weight:normal;color:#5a5a5a;">18</span>
<span style="left:72.30px;top:463.71px;font-size:9.2px;line-height:9.2px;font-weight:bold;color:#2e6ab3;transform:scaleX(0.9003);transform-origin:0 0;-webkit-text-stroke:0.1px currentColor;text-decoration:underline;text-decoration-thickness:0.8px;text-underline-offset:1px;">Ich</span>
<span style="left:303.04px;top:462.49px;font-size:11px;line-height:11px;font-weight:normal;color:#5a5a5a;">25</span>
<span style="left:420.65px;top:462.49px;font-size:11px;line-height:11px;font-weight:normal;color:#5a5a5a;">9</span>
<span style="left:72.30px;top:481.71px;font-size:9.2px;line-height:9.2px;font-weight:normal;color:#2e6ab3;transform:scaleX(1.0028);transform-origin:0 0;text-decoration:underline;text-decoration-thickness:0.8px;text-underline-offset:1px;">Eisenbichler, Oliver</span>
<span style="left:306.10px;top:480.49px;font-size:11px;line-height:11px;font-weight:normal;color:#5a5a5a;">1</span>
<span style="left:420.65px;top:480.49px;font-size:11px;line-height:11px;font-weight:normal;color:#5a5a5a;">1</span>
<span style="left:72.30px;top:499.71px;font-size:9.2px;line-height:9.2px;font-weight:normal;color:#2e6ab3;transform:scaleX(1.0245);transform-origin:0 0;text-decoration:underline;text-decoration-thickness:0.8px;text-underline-offset:1px;">Mauermann, Georg</span>
<span style="left:306.10px;top:498.49px;font-size:11px;line-height:11px;font-weight:normal;color:#5a5a5a;">1</span>
<span style="left:420.65px;top:498.49px;font-size:11px;line-height:11px;font-weight:normal;color:#5a5a5a;">4</span>
<span style="left:72.30px;top:516.71px;font-size:9.2px;line-height:9.2px;font-weight:normal;color:#2e6ab3;transform:scaleX(1.0232);transform-origin:0 0;text-decoration:underline;text-decoration-thickness:0.8px;text-underline-offset:1px;">Mustermann,&nbsp; Horst</span>
<span style="left:306.10px;top:515.49px;font-size:11px;line-height:11px;font-weight:normal;color:#5a5a5a;">7</span>
<span style="left:420.65px;top:515.49px;font-size:11px;line-height:11px;font-weight:normal;color:#5a5a5a;">4</span>
<span style="left:79.20px;top:424.69px;font-size:11px;line-height:11px;font-weight:bold;color:#4a4a4a;transform:scaleX(1.0622);transform-origin:0 0;-webkit-text-stroke:0.1px currentColor;">Mitarbeiter</span>
<span style="left:320.80px;top:426.04px;font-size:10px;line-height:10px;font-weight:bold;color:#4e4e4e;transform:scaleX(1.0043);transform-origin:0 0;-webkit-text-stroke:0.1px currentColor;">Aufgaben</span>
<span style="left:409.30px;top:426.04px;font-size:10px;line-height:10px;font-weight:bold;color:#4e4e4e;transform:scaleX(1.0106);transform-origin:0 0;-webkit-text-stroke:0.1px currentColor;">Vorgänge</span>
<span style="left:494.70px;top:445.71px;font-size:9.2px;line-height:9.2px;font-weight:normal;color:#2e6ab3;transform:scaleX(1.0073);transform-origin:0 0;text-decoration:underline;text-decoration-thickness:0.8px;text-underline-offset:1px;">gesamt</span>
<span style="left:728.00px;top:444.49px;font-size:11px;line-height:11px;font-weight:normal;color:#5a5a5a;">6</span>
<span style="left:843.65px;top:444.49px;font-size:11px;line-height:11px;font-weight:normal;color:#5a5a5a;">2</span>
<span style="left:728.00px;top:462.49px;font-size:11px;line-height:11px;font-weight:normal;color:#5a5a5a;">2</span>
<span style="left:843.65px;top:480.49px;font-size:11px;line-height:11px;font-weight:normal;color:#5a5a5a;">1</span>
<span style="left:494.70px;top:499.71px;font-size:9.2px;line-height:9.2px;font-weight:normal;color:#2e6ab3;text-decoration:underline;text-decoration-thickness:0.8px;text-underline-offset:1px;">Blumberger, Peter, Florist</span>
<span style="left:728.00px;top:498.49px;font-size:11px;line-height:11px;font-weight:normal;color:#5a5a5a;">2</span>
<span style="left:494.70px;top:516.71px;font-size:9.2px;line-height:9.2px;font-weight:normal;color:#2e6ab3;transform:scaleX(0.9962);transform-origin:0 0;text-decoration:underline;text-decoration-thickness:0.8px;text-underline-offset:1px;">Securatlas AG, Versicherungsbüro</span>
<span style="left:728.00px;top:515.49px;font-size:11px;line-height:11px;font-weight:normal;color:#5a5a5a;">1</span>
<span style="left:494.70px;top:534.71px;font-size:9.2px;line-height:9.2px;font-weight:normal;color:#2e6ab3;transform:scaleX(0.9977);transform-origin:0 0;text-decoration:underline;text-decoration-thickness:0.8px;text-underline-offset:1px;">Stadtwerke München</span>
<span style="left:728.00px;top:533.49px;font-size:11px;line-height:11px;font-weight:normal;color:#5a5a5a;">1</span>
<span style="left:843.65px;top:533.49px;font-size:11px;line-height:11px;font-weight:normal;color:#5a5a5a;">1</span>
<span style="left:501.00px;top:424.69px;font-size:11px;line-height:11px;font-weight:bold;color:#4a4a4a;transform:scaleX(0.9945);transform-origin:0 0;-webkit-text-stroke:0.1px currentColor;">Firmen</span>
<span style="left:742.50px;top:426.04px;font-size:10px;line-height:10px;font-weight:bold;color:#4e4e4e;transform:scaleX(1.0109);transform-origin:0 0;-webkit-text-stroke:0.1px currentColor;">Aufgaben</span>
<span style="left:831.80px;top:426.04px;font-size:10px;line-height:10px;font-weight:bold;color:#4e4e4e;transform:scaleX(1.0150);transform-origin:0 0;-webkit-text-stroke:0.1px currentColor;">Vorgänge</span>
<span style="left:81.00px;top:613.15px;font-size:11.4px;line-height:11.4px;font-weight:normal;color:#e8ecf1;transform:scaleX(0.8873);transform-origin:0 0;">Adressen</span>
<span style="left:150.30px;top:613.15px;font-size:11.4px;line-height:11.4px;font-weight:normal;color:#e8ecf1;transform:scaleX(0.9154);transform-origin:0 0;">Einstellungen</span>
<span style="left:237.90px;top:613.15px;font-size:11.4px;line-height:11.4px;font-weight:normal;color:#e8ecf1;transform:scaleX(0.8992);transform-origin:0 0;">Zu Win-CASA</span>
<span style="left:337.90px;top:615.33px;font-size:9.3px;line-height:9.3px;font-weight:normal;color:#e8ecf1;transform:scaleX(1.0493);transform-origin:0 0;">Nachrichten werden vom Server abgeholt...</span>
</body></html>
